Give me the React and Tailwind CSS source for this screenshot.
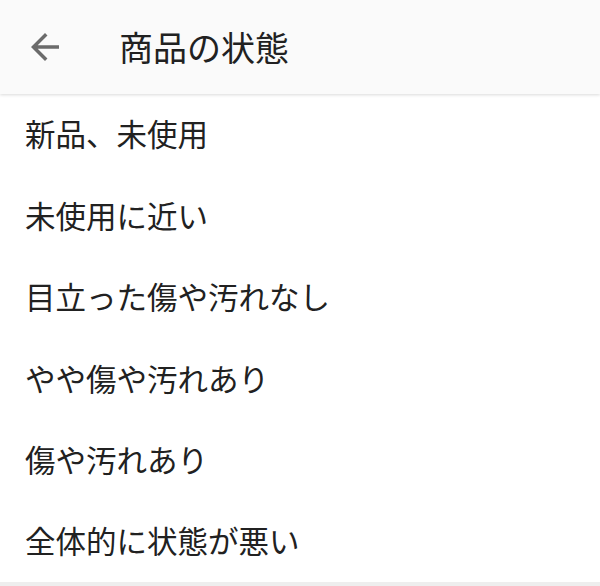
export default function App() {
  const items = [
    "新品、未使用",
    "未使用に近い",
    "目立った傷や汚れなし",
    "やや傷や汚れあり",
    "傷や汚れあり",
    "全体的に状態が悪い",
  ];
  return (
    <div className="w-[600px] h-[586px] bg-white overflow-hidden flex flex-col" style={{ fontFamily: '"Noto Sans CJK JP", "Noto Sans", sans-serif' }}>
      <div className="h-[94px] shrink-0 bg-[#fafafa] flex items-center shadow-[0_1px_3px_rgba(0,0,0,0.15)] relative z-10">
        <svg width="42" height="42" viewBox="0 0 24 24" className="ml-[24px]" fill="#6b6b6b">
          <path d="M20 11H7.83l5.59-5.59L12 4l-8 8 8 8 1.41-1.41L7.83 13H20v-2z" />
        </svg>
        <div className="ml-[53px] text-[34px] text-[#212121] leading-none">商品の状態</div>
      </div>
      <div className="flex flex-col">
        {items.map((t) => (
          <div key={t} className="h-[81.4px] flex items-center pl-[25px] pb-[2px] text-[30.5px] text-[#212121] leading-none">
            {t}
          </div>
        ))}
      </div>
      <div className="flex-1 bg-[#eeeeee]" />
    </div>
  );
}
